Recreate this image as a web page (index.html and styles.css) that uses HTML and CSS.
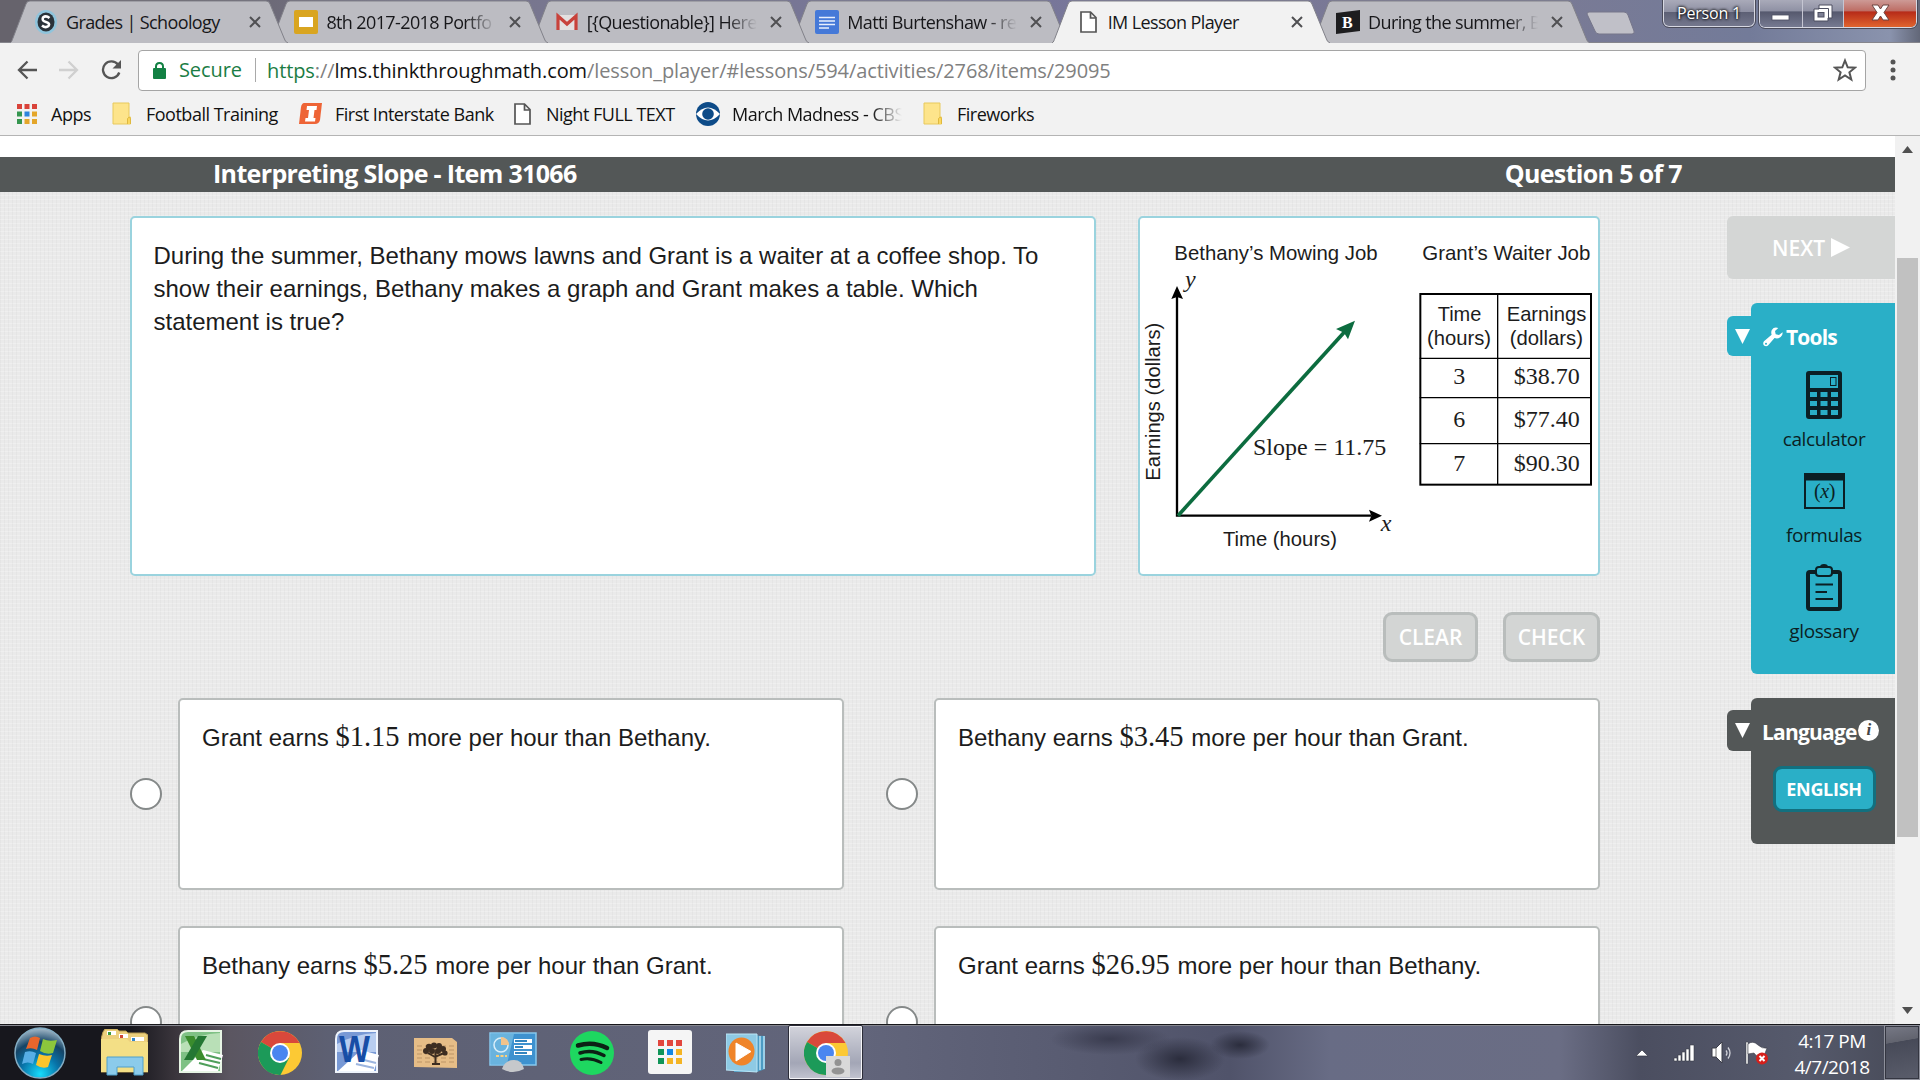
FILE: index.html
```html
<!DOCTYPE html>
<html lang="en">

<head>
    <meta charset="UTF-8">
    <meta name="viewport" content="width=device-width, initial-scale=1.0">
    <title>IM Lesson Player</title>
    <link rel="stylesheet" href="styles.css">
</head>

<body>
    <!-- Shared shapes -->
    <svg class="defs" width="0" height="0">
        <symbol id="tab-shape" viewBox="0 0 278 43">
            <path d="M0 43 C2 42 2 40 3 38 L16 4 Q17 1 20 1 H256 Q259 1 260 4 L274 38 Q275 42 278 43" />
        </symbol>
        <symbol id="close" viewBox="0 0 12 12">
            <path d="M1 1 L11 11 M11 1 L1 11" fill="none" stroke="#505053" stroke-width="2" />
        </symbol>
        <symbol id="doc" viewBox="0 0 17 22">
            <path d="M1 1 H10.5 L16 6.500 V21 H1 Z M10.500 1 V7 H16" fill="#fff" stroke="#555" stroke-width="1.700" />
        </symbol>
        <symbol id="folder" viewBox="0 0 19 23">
            <path d="M1 1 H17 V15 H18.500 V22 H1 Z" fill="#fde48b" stroke="#e8c95c" />
            <path d="M15.500 22 V16.500 Q17 14 18.500 16.500 V22" fill="#fbd75e" stroke="#dfb93f" />
        </symbol>
        <symbol id="chrome" viewBox="0 0 44 44">
            <circle cx="22" cy="22" r="22" fill="#fcc934" />
            <path d="M22 22 L3 11 A22 22 0 0 1 41.500 12 H22 Z" fill="#d9483b" />
            <path d="M22 22 L3 11 A22 22 0 0 0 22.500 44 L31 27 Z" fill="#1c9a59" />
            <circle cx="22" cy="22" r="10" fill="#fff" />
            <circle cx="22" cy="22" r="8" fill="#4a86f0" />
        </symbol>
    </svg>

    <div class="tabstrip">
        <div class="tab">
            <svg class="tab-shape"><use href="#tab-shape" /></svg>
            <svg class="favicon" viewBox="0 0 22 24">
                <ellipse cx="11" cy="12" rx="11" ry="12" fill="#8fc4dc" />
                <ellipse cx="11" cy="12" rx="8.500" ry="9.500" fill="#2a3239" />
                <path d="M14.500 8 Q11 5 8 7.500 Q6.500 11 11 12 Q15.500 13.500 13.500 16 Q10.500 18.500 7 15.500" fill="none" stroke="#fff" stroke-width="2.600" />
            </svg>
            <span class="tab-title">Grades | Schoology</span>
            <svg class="tab-close"><use href="#close" /></svg>
        </div>
        <div class="tab">
            <svg class="tab-shape"><use href="#tab-shape" /></svg>
            <svg class="favicon" viewBox="0 0 24 24">
                <rect width="24" height="24" rx="2" fill="#d9a520" />
                <rect x="5" y="7" width="14" height="10" fill="#fff" />
            </svg>
            <span class="tab-title fade">8th 2017-2018 Portfo</span>
            <svg class="tab-close"><use href="#close" /></svg>
        </div>
        <div class="tab">
            <svg class="tab-shape"><use href="#tab-shape" /></svg>
            <svg class="favicon" viewBox="0 0 22 24">
                <path d="M1 5 H21 V20 H1 Z" fill="#e3e0e0" />
                <path d="M2 20 V6 L11 14 L20 6 V20" fill="none" stroke="#c8423b" stroke-width="3.200" />
            </svg>
            <span class="tab-title fade">[{Questionable}] Here</span>
            <svg class="tab-close"><use href="#close" /></svg>
        </div>
        <div class="tab">
            <svg class="tab-shape"><use href="#tab-shape" /></svg>
            <svg class="favicon" viewBox="0 0 24 24">
                <rect width="24" height="24" rx="2" fill="#4579d8" />
                <path d="M4 7.500 H20 M4 11 H20 M4 14.500 H20 M4 18 H14" stroke="#e8effc" stroke-width="1.700" />
            </svg>
            <span class="tab-title fade">Matti Burtenshaw - re</span>
            <svg class="tab-close"><use href="#close" /></svg>
        </div>
        <div class="tab active">
            <svg class="tab-shape"><use href="#tab-shape" /></svg>
            <svg class="favicon doc"><use href="#doc" /></svg>
            <span class="tab-title">IM Lesson Player</span>
            <svg class="tab-close"><use href="#close" /></svg>
        </div>
        <div class="tab">
            <svg class="tab-shape"><use href="#tab-shape" /></svg>
            <svg class="favicon" viewBox="0 0 24 24">
                <path d="M0 3 L24 0 V21 L0 24 Z" fill="#1d1d1f" />
                <text x="6" y="18" class="brainly">B</text>
            </svg>
            <span class="tab-title fade">During the summer, B</span>
            <svg class="tab-close"><use href="#close" /></svg>
        </div>
        <svg class="new-tab" viewBox="0 0 50 24">
            <path d="M1 3 Q1 1 3 1 H38 Q41 1 42 4 L48 20 Q49 23 46 23 H13 Q10 23 9 20 Z" fill="#c0c0c8" stroke="#76768a" />
        </svg>
        <div class="window-buttons">
            <div class="person">Person 1</div>
            <div class="controls">
                <div class="control">
                    <svg viewBox="0 0 42 32" width="42"><rect x="12" y="15" width="17" height="5" fill="#fff" stroke="#4c4f61" stroke-width=".8" /></svg>
                </div>
                <div class="control">
                    <svg viewBox="0 0 40 32" width="40">
                        <path d="M16 5 H29 V18 H25 V21 H11 V9 H16 Z" fill="#fff" stroke="#4c4f61" />
                        <path d="M15.500 8.500 H25.500 V18" fill="none" stroke="#4c4f61" />
                        <rect x="15" y="12.500" width="6" height="4.500" fill="#7c7f94" stroke="#4c4f61" />
                    </svg>
                </div>
                <div class="control close-window">
                    <svg viewBox="0 0 72 32" width="72"><path d="M28 5 H34 L36.500 9 L39 5 H45 L40 12.500 L45 20 H39 L36.500 16 L34 20 H28 L33 12.500 Z" fill="#fff" stroke="#6c4441" /></svg>
                </div>
            </div>
        </div>
    </div>

    <div class="toolbar">
        <svg class="nav-icon" viewBox="0 0 20 20"><path d="M20 10 H2 M10.500 1.500 L2 10 L10.500 18.500" fill="none" stroke="#555" stroke-width="2.300" /></svg>
        <svg class="nav-icon" viewBox="0 0 20 20"><path d="M0 10 H18 M9.500 1.500 L18 10 L9.500 18.500" fill="none" stroke="#d0d0d0" stroke-width="2.300" /></svg>
        <svg class="nav-icon" viewBox="0 0 20 20"><path d="M17 4.500 A8.400 8.400 0 1 0 18.300 12.500" fill="none" stroke="#555" stroke-width="2.300" /><path d="M20 0 V8.500 H11.500 Z" fill="#555" /></svg>
        <div class="omnibox">
            <svg class="lock" viewBox="0 0 13 17"><rect y="6" width="13" height="11" rx="1" fill="#128043" /><path d="M3 7 V4.500 Q3 1 6.500 1 Q10 1 10 4.500 V7" fill="none" stroke="#128043" stroke-width="2" /></svg>
            <span class="secure">Secure</span>
            <span class="url"><b class="https">https</b>://<b class="host">lms.thinkthroughmath.com</b>/lesson_player/#lessons/594/activities/2768/items/29095</span>
            <svg class="star" viewBox="0 0 24 24"><path d="M12 2.500 L14.700 9.300 L22 9.700 L16.400 14.300 L18.300 21.500 L12 17.500 L5.700 21.500 L7.600 14.300 L2 9.700 L9.300 9.300 Z" fill="none" stroke="#555" stroke-width="2" /></svg>
        </div>
        <svg class="menu" viewBox="0 0 6 22"><circle cx="3" cy="3" r="2.500" /><circle cx="3" cy="11" r="2.500" /><circle cx="3" cy="19" r="2.500" /></svg>
    </div>

    <div class="bookmarks">
        <div class="bookmark apps">
            <svg class="apps-icon" viewBox="0 0 20 20">
                <path d="M0 0h5v5h-5zM7.500 0h5v5h-5zM15 0h5v5h-5z" fill="#d9433a" />
                <path d="M0 7.500h5v5h-5zM0 15h5v5h-5z" fill="#35964f" />
                <path d="M7.500 7.500h5v5h-5z" fill="#2d84dd" />
                <path d="M15 7.500h5v5h-5zM7.500 15h5v5h-5zM15 15h5v5h-5z" fill="#e4a62a" />
            </svg>
            <span>Apps</span>
        </div>
        <div class="bookmark training"><svg class="folder"><use href="#folder" /></svg><span>Football Training</span></div>
        <div class="bookmark bank">
            <svg width="24" height="24" viewBox="0 0 24 24">
                <path d="M5 1 H23 L21 18 Q20 22 16 22 H0 L2 5 Q3 1 5 1 Z" fill="#ee6436" />
                <path d="M8 4 H18 L17.500 8 H15.500 L14.500 16 H16.500 L16 19.500 H6 L6.500 16 H9 L10 8 H7.500 Z" fill="#fff" />
            </svg>
            <span>First Interstate Bank</span>
        </div>
        <div class="bookmark night"><svg class="doc"><use href="#doc" /></svg><span>Night FULL TEXT</span></div>
        <div class="bookmark cbs">
            <svg width="24" height="24" viewBox="0 0 24 24">
                <circle cx="12" cy="12" r="12" fill="#0d4b88" />
                <path d="M0 12 Q12 -1 24 12 Q12 25 0 12 Z" fill="#fff" />
                <circle cx="12" cy="12" r="5.800" fill="#0d4b88" />
            </svg>
            <span class="fade">March Madness - CBS</span>
        </div>
        <div class="bookmark fireworks"><svg class="folder"><use href="#folder" /></svg><span>Fireworks</span></div>
    </div>

    <div class="viewport">
        <div class="page">
            <div class="lesson-header">
                <span class="lesson-title">Interpreting Slope - Item 31066</span>
                <span class="lesson-count">Question 5 of 7</span>
            </div>

            <div class="lesson">
                <div class="content">
                    <div class="stem">
                        <div class="panel question">
                            <p>During the summer, Bethany mows lawns and Grant is a waiter at a coffee shop. To show their earnings, Bethany makes a graph and Grant makes a table. Which statement is true?</p>
                        </div>
                        <div class="panel figure">
                            <svg viewBox="31 24 1374 1068" width="458" height="356">
                                <g class="fig-sans">
                                    <text x="134" y="149" textLength="610" lengthAdjust="spacingAndGlyphs">Bethany’s Mowing Job</text>
                                    <text x="878" y="149" textLength="504" lengthAdjust="spacingAndGlyphs">Grant’s Waiter Job</text>
                                    <text x="280" y="1007" textLength="342" lengthAdjust="spacingAndGlyphs">Time (hours)</text>
                                    <text transform="translate(92 812) rotate(-90)" textLength="474" lengthAdjust="spacingAndGlyphs">Earnings (dollars)</text>
                                    <text x="924" y="333" textLength="131" lengthAdjust="spacingAndGlyphs">Time</text>
                                    <text x="892" y="406" textLength="192" lengthAdjust="spacingAndGlyphs">(hours)</text>
                                    <text x="1131" y="333" textLength="239" lengthAdjust="spacingAndGlyphs">Earnings</text>
                                    <text x="1140" y="406" textLength="220" lengthAdjust="spacingAndGlyphs">(dollars)</text>
                                </g>
                                <g class="fig-serif">
                                    <text x="166" y="230" class="axis">y</text>
                                    <text x="753" y="962" class="axis">x</text>
                                    <text x="370" y="734" textLength="400" lengthAdjust="spacingAndGlyphs">Slope = 11.75</text>
                                    <text x="971" y="521">3</text>
                                    <text x="971" y="652">6</text>
                                    <text x="971" y="782">7</text>
                                    <text x="1152" y="521" textLength="198" lengthAdjust="spacingAndGlyphs">$38.70</text>
                                    <text x="1152" y="652" textLength="198" lengthAdjust="spacingAndGlyphs">$77.40</text>
                                    <text x="1152" y="782" textLength="198" lengthAdjust="spacingAndGlyphs">$90.30</text>
                                </g>
                                <path d="M142 255 V917 H725" fill="none" stroke="#000" stroke-width="7" />
                                <path d="M142 228 L160 267 L142 261 L125 267 Z M757 917 L718 899 L725 917 L718 935 Z" />
                                <path d="M145 917 L645 365" stroke="#0c6c3f" stroke-width="11" />
                                <path d="M676 332 L655 388 L643 368 L619 357 Z" fill="#0c6c3f" />
                                <rect x="872" y="252" width="512" height="572" fill="none" stroke="#000" stroke-width="6" />
                                <path d="M870 445 H1386 M870 563 H1386 M870 701 H1386 M1104 250 V824" stroke="#000" stroke-width="4" />
                            </svg>
                        </div>
                    </div>

                    <div class="actions">
                        <button class="btn">CLEAR</button>
                        <button class="btn check">CHECK</button>
                    </div>

                    <div class="answers">
                        <label class="answer"><span class="radio"></span><span class="choice">Grant earns <span class="math">$1.15</span> more per hour than Bethany.</span></label>
                        <label class="answer"><span class="radio"></span><span class="choice">Bethany earns <span class="math">$3.45</span> more per hour than Grant.</span></label>
                        <label class="answer"><span class="radio"></span><span class="choice">Bethany earns <span class="math">$5.25</span> more per hour than Grant.</span></label>
                        <label class="answer"><span class="radio"></span><span class="choice">Grant earns <span class="math">$26.95</span> more per hour than Bethany.</span></label>
                    </div>
                </div>

                <div class="sidebar">
                    <div class="next"><span>NEXT</span><svg width="19" height="19"><path d="M0 0 L19 9.500 L0 19 Z" fill="#fff" /></svg></div>

                    <div class="side-panel tools">
                        <div class="handle"><svg width="15" height="15"><path d="M0 0 H15 L7.500 15 Z" fill="#fff" /></svg></div>
                        <div class="side-body">
                            <div class="side-title">
                                <svg class="wrench" viewBox="0 0 20 20"><path d="M19.500 5.200 L16 8 L12.700 7.200 L12 4 L15.300 1 Q11 -.5 8.800 3 Q7.800 5.300 8.600 7.700 L1 14.300 Q-.6 16.500 1 18.500 Q3.200 20 5 18.500 L11.500 11 Q15 12.200 17.700 10 Q20 8 19.500 5.200 Z" fill="#fff" /><circle cx="3" cy="16.700" r="1" fill="#2aafc7" /></svg>
                                <span>Tools</span>
                            </div>
                            <div class="tool calculator">
                                <svg width="36" height="48" viewBox="0 0 36 48">
                                    <rect width="36" height="48" rx="3" fill="#0b1f24" />
                                    <path d="M4 4 H32 V17 H4 Z M4 21h7v5h-7z M14.500 21h7v5h-7z M25 21h7v5h-7z M4 30h7v5h-7z M14.500 30h7v5h-7z M25 30h7v5h-7z M4 39h7v5h-7z M14.500 39h7v5h-7z M25 39h7v5h-7z" fill="#2aafc7" />
                                    <rect x="24.500" y="6.500" width="5.500" height="8" fill="none" stroke="#0b1f24" />
                                </svg>
                                <span>calculator</span>
                            </div>
                            <div class="tool formulas">
                                <svg width="41" height="36" viewBox="0 0 41 36">
                                    <rect x="1" y="1" width="39" height="34" fill="none" stroke="#0b1f24" stroke-width="2" />
                                    <rect width="41" height="7.500" fill="#0b1f24" />
                                    <text x="20.500" y="25" text-anchor="middle" class="formula">(<tspan class="formula-x">x</tspan>)</text>
                                </svg>
                                <span>formulas</span>
                            </div>
                            <div class="tool glossary">
                                <svg width="36" height="47" viewBox="0 0 36 47">
                                    <rect x="2" y="8" width="32" height="37" rx="2" fill="none" stroke="#0b1f24" stroke-width="4" />
                                    <path d="M14 3 Q14 0 18 0 Q22 0 22 3 Z" fill="#0b1f24" />
                                    <rect x="10" y="3" width="16" height="9" rx="3" fill="#2aafc7" stroke="#0b1f24" stroke-width="2" />
                                    <path d="M9.500 20.500 H27 M9.500 28 H21 M9.500 35 H27" stroke="#0b1f24" stroke-width="2" />
                                </svg>
                                <span>glossary</span>
                            </div>
                        </div>
                    </div>

                    <div class="side-panel language">
                        <div class="handle"><svg width="15" height="15"><path d="M0 0 H15 L7.500 15 Z" fill="#fff" /></svg></div>
                        <div class="side-body">
                            <div class="side-title"><span>Language</span><i class="info">i</i></div>
                            <button class="english">ENGLISH</button>
                        </div>
                    </div>
                </div>
            </div>
        </div>

        <div class="scrollbar">
            <svg width="11" height="7"><path d="M0 7 L5.500 0 L11 7 Z" fill="#505050" /></svg>
            <div class="track"><div class="thumb"></div></div>
            <svg width="11" height="7"><path d="M0 0 L5.500 7 L11 0 Z" fill="#505050" /></svg>
        </div>
    </div>

    <div class="taskbar">
        <div class="task start">
            <svg width="52" height="52" viewBox="0 0 52 52">
                <defs>
                    <radialGradient id="orb" cx=".5" cy=".92" r=".95">
                        <stop offset="0" stop-color="#16dcfc" />
                        <stop offset=".4" stop-color="#0873a8" />
                        <stop offset=".68" stop-color="#154466" />
                        <stop offset="1" stop-color="#b9cbd8" />
                    </radialGradient>
                </defs>
                <circle cx="26" cy="26" r="25" fill="url(#orb)" stroke="#83adc4" stroke-width="1.500" />
                <path d="M16 11 Q21 8 26 11 L23 23 Q18 20 12 22 Z" fill="#e8662c" />
                <path d="M29 12 Q35 15 43 13 L39 26 Q32 28 26 24 Z" fill="#8cc63c" />
                <path d="M11 25 Q17 23 22 26 L19 37 Q14 34 8 37 Z" fill="#56aee6" />
                <path d="M25 27 Q32 30 38 28 L34 40 Q28 42 22 38 Z" fill="#fcc52c" />
            </svg>
        </div>
        <div class="task explorer">
            <svg width="47" height="47" viewBox="0 0 47 47">
                <path d="M2 3 L4 0 H16 L18 2 H25 L27 4 H44 L47 6 V43 H0 V10 Z" fill="#ecd07d" stroke="#b69a50" />
                <path d="M6 2 H15 V6 H6 Z M18 5 H27 V9 H18 Z M30 8 H43 V12 H30 Z" fill="#fff" />
                <path d="M7 3h3v3h-3z" fill="#3d9b3d" /><path d="M19 6h3v3h-3z" fill="#cf4636" /><path d="M31 9h3v3h-3z" fill="#3388ca" />
                <path d="M0 10 H26 L29 13 H47 V43 H0 Z" fill="#f3df86" />
                <path d="M6 28 H42 V46 H33 V38 H16 V46 H6 Z" fill="#8bcbeb" stroke="#4f9fca" />
            </svg>
        </div>
        <div class="task excel">
            <svg width="44" height="44" viewBox="0 0 44 44">
                <path d="M9 1 H42 V42 H1 V9 Q1 1 9 1 Z" fill="#7fc185" stroke="#e7f5e5" stroke-width="2" />
                <path d="M2 14 Q20 4 41 3 V22 H2 Z" fill="#b9e0b7" />
                <path d="M24 20 L44 25 L39 41 H3 Z" fill="#fff" />
                <path d="M27 25 L42 29 M24 29 L41 33 M20 33 L39 38" stroke="#4f9f5b" stroke-width="2" />
                <path d="M6 6 H15 L27 30 H18 Z" fill="#3a8c2d" /><path d="M19 6 H28 L14 30 H5 Z" fill="#247733" />
            </svg>
        </div>
        <div class="task chrome"><svg width="44" height="44"><use href="#chrome" /></svg></div>
        <div class="task word">
            <svg width="44" height="44" viewBox="0 0 44 44">
                <path d="M9 1 H42 V42 H1 V9 Q1 1 9 1 Z" fill="#7899d5" stroke="#eff4fc" stroke-width="2" />
                <path d="M2 14 Q20 4 41 3 V22 H2 Z" fill="#b8cdf0" />
                <path d="M26 20 L44 25 L39 41 H3 Z" fill="#fff" />
                <path d="M25 29 L41 33 M21 34 L39 38" stroke="#9cb5df" stroke-width="2" />
                <text x="4" y="32" class="word-w" textLength="31" lengthAdjust="spacingAndGlyphs">W</text>
            </svg>
        </div>
        <div class="task tree">
            <svg width="44" height="32" viewBox="0 0 44 32">
                <path d="M0 1 H38 L43 5 V31 L0 30 Z" fill="#e6bd87" />
                <path d="M3 9H41M3 13H41M3 17H41M3 21H41M3 25H41" stroke="#bd9566" stroke-dasharray="5 3" />
                <g fill="#3d2d21">
                    <circle cx="12" cy="14" r="3" /><circle cx="15" cy="10" r="3.200" /><circle cx="20" cy="8.500" r="3" /><circle cx="25" cy="9" r="3" />
                    <circle cx="29" cy="12" r="3" /><circle cx="31" cy="16" r="2.600" /><circle cx="18" cy="14" r="3" /><circle cx="24" cy="14" r="3" />
                </g>
                <path d="M14 16 L21 20 L30 16 M21.500 15 V27 M18 27 H26" fill="none" stroke="#3d2d21" stroke-width="2" />
            </svg>
        </div>
        <div class="task panel-icon">
            <svg width="48" height="42" viewBox="0 0 48 42">
                <path d="M1 1 H47 V33 H1 Z" fill="#3e92cf" stroke="#86c8ed" stroke-width="1.500" />
                <path d="M2 2 H25 L18 32 H2 Z" fill="#69b3de" />
                <circle cx="12" cy="13" r="7" fill="none" stroke="#d9eef9" stroke-width="1.500" /><path d="M12 13 V5 A8 8 0 0 1 20 13 Z" fill="#f2c38b" />
                <path d="M25 9H43M25 15H43M25 21H43" stroke="#fff" stroke-width="4" /><path d="M26 9H38M26 15H34M26 21H38" stroke="#3385bf" stroke-width="2" />
                <path d="M7 24H18" stroke="#fbd07c" stroke-width="2" stroke-dasharray="3 1.500" />
                <path d="M13 37 Q16 28 25 28 Q33 28 35 37 Q24 43 13 37 Z" fill="#c6c8cb" />
            </svg>
        </div>
        <div class="task spotify">
            <svg width="44" height="44" viewBox="0 0 44 44">
                <circle cx="22" cy="22" r="22" fill="#1ed760" />
                <path d="M8 14.500 Q23 10 37 17" fill="none" stroke="#0c2115" stroke-width="4.500" stroke-linecap="round" />
                <path d="M10 22 Q22 18 34 24.500" fill="none" stroke="#0c2115" stroke-width="3.500" stroke-linecap="round" />
                <path d="M11 28.500 Q21 26 31 31.500" fill="none" stroke="#0c2115" stroke-width="3" stroke-linecap="round" />
            </svg>
        </div>
        <div class="task launcher">
            <svg width="44" height="44" viewBox="0 0 44 44">
                <rect width="44" height="44" rx="3" fill="#f5f5f5" />
                <path d="M10 10h6v6h-6zM19 10h6v6h-6zM28 10h6v6h-6z" fill="#e2463e" />
                <path d="M10 19h6v6h-6zM10 28h6v6h-6z" fill="#109558" /><path d="M19 19h6v6h-6z" fill="#1287e4" />
                <path d="M28 19h6v6h-6zM19 28h6v6h-6zM28 28h6v6h-6z" fill="#f4b424" />
            </svg>
        </div>
        <div class="task media">
            <svg width="40" height="40" viewBox="0 0 40 40">
                <path d="M8 1 L39 3 V36 L31 39 H8 Z" fill="#4c9bc3" /><path d="M34 3 V37 M38 3 V36" stroke="#b6e1f3" stroke-width="1.500" />
                <path d="M0 1 H31 V39 L0 37 Z" fill="#8ecae4" stroke="#bce5f5" />
                <ellipse cx="15.500" cy="18.500" rx="13" ry="14" fill="#ef8429" /><path d="M10 10 L25 18.500 L10 28 Z" fill="#fff" stroke="#fff" stroke-linejoin="round" />
            </svg>
        </div>
        <div class="task running">
            <svg width="46" height="46" viewBox="0 0 46 46">
                <use href="#chrome" width="44" height="44" />
                <rect x="22" y="25" width="24" height="21" fill="#d9d9d9" /><circle cx="34" cy="31.500" r="3.500" fill="#939393" /><ellipse cx="34" cy="40" rx="6.500" ry="3.500" fill="#939393" />
            </svg>
        </div>

        <div class="tray">
            <svg class="tray-up" width="14" height="8"><path d="M1 7 L7 1 L13 7 Z" fill="#fff" stroke="#3b3c47" stroke-width=".7" /></svg>
            <svg class="tray-signal" width="22" height="18"><path d="M1 14h3v3h-3zM5 11h3v6h-3zM9 8h3v9h-3zM13 5h3v12h-3zM17 1h4v16h-4z" fill="#fff" stroke="#3b3c47" stroke-width=".6" /></svg>
            <svg class="tray-volume" width="21" height="23"><path d="M1 7 H5 L11 1 V22 L5 16 H1 Z" fill="#fff" stroke="#3b3c47" /><path d="M5 7 V16" stroke="#777" /><path d="M15 9.500 Q17 12 15 14.500 M17 6.500 Q21 12 17 17.500" fill="none" stroke="#d2d3da" stroke-width="1.300" /></svg>
            <svg class="tray-flag" width="25" height="24"><path d="M1 1 H3 V23 H1 Z" fill="#fff" stroke="#3b3c47" stroke-width=".5" /><path d="M3 3 Q8 -1 13 4 Q17 8 22 7 L19 15 Q12 17 9 12 L3 13 Z" fill="#fff" stroke="#3b3c47" stroke-width=".6" /><circle cx="17" cy="17.500" r="6" fill="#d51f1b" /><path d="M14.500 15 L19.500 20 M19.500 15 L14.500 20" stroke="#fff" stroke-width="2" /></svg>
            <div class="clock"><span>4:17 PM</span><span>4/7/2018</span></div>
            <div class="show-desktop"></div>
        </div>
    </div>
</body>

</html>
```

FILE: styles.css
```css
* {
    margin: 0;
    padding: 0;
    box-sizing: border-box;
}

html, body {
    width: 1920px;
    height: 1080px;
    overflow: hidden;
    font-family: "Open Sans", "Noto Sans", sans-serif;
}

body {
    display: flex;
    flex-direction: column;
}

svg {
    display: block;
    flex: none;
}

.defs {
    position: absolute;
}

/* Browser tabs */
.tabstrip {
    display: flex;
    flex: none;
    height: 43px;
    padding-left: 10px;
    background: linear-gradient(90deg, #66636c 0, #66636c 180px, #78768c 420px, #77769a 1000px, #7b7a94 1500px, #737b99 1750px, #8a93ad 1890px, #626778 1920px);
    border-bottom: 1px solid #85858c;
}

.tab {
    position: relative;
    display: flex;
    flex: none;
    align-items: center;
    width: 278px;
    height: 43px;
    padding-left: 24px;
    margin-right: -17.600px;
    z-index: 6;
}

.tab:nth-child(2) { z-index: 5; }
.tab:nth-child(3) { z-index: 4; }
.tab:nth-child(4) { z-index: 3; }
.tab:nth-child(6) { z-index: 1; }

.tab.active {
    z-index: 10;
}

.tab-shape {
    position: absolute;
    left: 0;
    top: 0;
    width: 278px;
    height: 43px;
    fill: #bcbcc2;
    stroke: #818189;
    z-index: -1;
}

.tab.active .tab-shape {
    fill: #f2f2f2;
}

.favicon {
    width: 24px;
    height: 24px;
    margin-right: 8px;
}

.favicon.doc {
    width: 17px;
    height: 22px;
    margin: 0 11px 0 4px;
}

.brainly {
    font: bold 16px "Liberation Serif", serif;
    fill: #fff;
}

.tab-title {
    width: 170px;
    margin-right: 13px;
    white-space: nowrap;
    font-size: 18px;
    letter-spacing: -.620px;
    color: #17171a;
}

.fade {
    -webkit-mask-image: linear-gradient(90deg, #000 82%, transparent 100%);
    mask-image: linear-gradient(90deg, #000 82%, transparent 100%);
}

.tab-close {
    width: 12px;
    height: 12px;
}

.new-tab {
    width: 50px;
    height: 24px;
    margin: 11px 0 0 14px;
}

.window-buttons {
    display: flex;
    align-items: flex-start;
    gap: 4px;
    margin-left: auto;
    padding-right: 3px;
}

.person {
    width: 92px;
    height: 27px;
    border: 1px solid #d7d8e2;
    border-top: 0;
    border-radius: 0 0 6px 6px;
    outline: 1px solid #4a4b5a;
    background: linear-gradient(#a9aab9 0, #8e90a3 45%, #5c5f74 46%, #74778d 100%);
    color: #fff;
    font-size: 16px;
    letter-spacing: -.200px;
    line-height: 26px;
    text-align: center;
    text-shadow: 0 0 3px #000, 0 0 3px #000;
}

.controls {
    display: flex;
    height: 28px;
    border: 1px solid #d7d8e2;
    border-top: 0;
    border-radius: 0 0 6px 6px;
    outline: 1px solid #4a4b5a;
    overflow: hidden;
}

.control {
    border-right: 1px solid #c5c6d3;
    background: linear-gradient(#a9aab9 0, #8e90a3 42%, #55586d 43%, #767a91 100%);
}

.control.close-window {
    border: 0;
    background: linear-gradient(#cd9a96 0, #bd6b62 42%, #b62a18 43%, #e0642e 100%);
}

/* Address bar */
.toolbar {
    display: flex;
    flex: none;
    align-items: center;
    height: 54px;
    padding: 0 24px 0 17px;
    background: #f2f2f2;
}

.nav-icon {
    width: 20px;
    height: 20px;
    margin-right: 22px;
}

.nav-icon + .nav-icon + .nav-icon {
    margin-right: 17px;
}

.omnibox {
    display: flex;
    align-items: center;
    width: 1728px;
    height: 41px;
    padding: 0 8px 0 14px;
    border: 1px solid #a5a5a5;
    border-radius: 4px;
    background: #fff;
    font-size: 20px;
    letter-spacing: -.100px;
}

.lock {
    width: 13px;
    height: 17px;
    margin-right: 13px;
}

.secure {
    width: 77px;
    height: 24px;
    line-height: 23px;
    border-right: 1px solid #a9a9a9;
    color: #1b7d44;
}

.url {
    margin-left: 11px;
    color: #808080;
    white-space: nowrap;
}

.url b {
    font-weight: normal;
}

.url .https {
    color: #1b7d44;
}

.url .host {
    color: #111;
}

.star {
    width: 24px;
    height: 24px;
    margin-left: auto;
}

.menu {
    width: 6px;
    height: 22px;
    margin-left: auto;
    fill: #555;
}

.bookmarks {
    display: flex;
    flex: none;
    align-items: center;
    height: 39px;
    padding: 0 0 5px 17px;
    background: #f2f2f2;
    border-bottom: 1px solid #b4b4b4;
    font-size: 18px;
    letter-spacing: -.500px;
    color: #111;
}

.bookmark {
    display: flex;
    align-items: center;
    white-space: nowrap;
}

.bookmark .folder {
    width: 19px;
    height: 23px;
    margin-right: 15px;
}

.bookmark .doc {
    width: 17px;
    height: 22px;
    margin-right: 15px;
}

.apps-icon {
    width: 20px;
    height: 20px;
    margin-right: 14px;
}

.apps { width: 95px; }
.training { width: 187px; }
.bank { width: 215px; gap: 12px; }
.night { width: 182px; }
.cbs { width: 227px; gap: 12px; }

.cbs .fade {
    width: 170px;
}

/* Lesson page */
.viewport {
    display: flex;
    flex: none;
    height: 888px;
    overflow: hidden;
}

.page {
    width: 1895px;
    padding-top: 21px;
    background: #fff;
}

.lesson-header {
    display: flex;
    justify-content: space-between;
    height: 35px;
    padding: 0 213px;
    background: #535757;
    color: #fff;
    font-size: 25px;
    letter-spacing: -.660px;
    font-weight: bold;
    line-height: 33px;
    white-space: nowrap;
}

.lesson {
    display: flex;
    justify-content: space-between;
    height: 832px;
    padding: 24px 0 0 130px;
    background-color: #eaeaea;
    background-image:
        repeating-linear-gradient(90deg, rgba(0, 0, 0, .022) 0, rgba(0, 0, 0, .022) 1px, transparent 1px, transparent 4px),
        repeating-linear-gradient(0deg, rgba(255, 255, 255, .25) 0, rgba(255, 255, 255, .25) 1px, transparent 1px, transparent 4px);
}

.content {
    width: 1470px;
}

.stem {
    display: flex;
    justify-content: space-between;
}

.panel {
    height: 360px;
    border: 2px solid #9ad3de;
    border-radius: 5px;
    background: #fff;
}

.question {
    width: 966px;
    padding: 21px 40px 0 21.500px;
    font: 24px/33px "Liberation Sans", Arial, sans-serif;
    color: #1c1c1c;
}

.figure {
    width: 462px;
}

.fig-sans {
    font: 62px "Liberation Sans", Arial, sans-serif;
    fill: #1c1c1c;
}

.fig-serif {
    font: 72px "Liberation Serif", "Times New Roman", serif;
    fill: #1c1c1c;
}

.axis {
    font-style: italic;
}

.actions {
    display: flex;
    justify-content: flex-end;
    gap: 25px;
    margin-top: 36px;
}

.btn {
    width: 95px;
    height: 50px;
    border: 3px solid #b9bdbc;
    border-radius: 9px;
    background: #d3d5d4;
    color: #fff;
    font-family: "Open Sans", sans-serif;
    font-size: 21px;
    font-weight: 600;
}

.btn.check {
    width: 97px;
}

.answers {
    display: grid;
    grid-template-columns: 714px 714px;
    justify-content: space-between;
    row-gap: 36px;
    margin-top: 36px;
}

.answer {
    display: flex;
    align-items: center;
    justify-content: space-between;
}

.radio {
    width: 32px;
    height: 32px;
    border: 2px solid #858989;
    border-radius: 50%;
    background: #fff;
}

.choice {
    width: 666px;
    height: 192px;
    padding: 20px 22px;
    border: 2px solid #b9bdbc;
    border-radius: 5px;
    background: #fff;
    font: 24px/36px "Liberation Sans", Arial, sans-serif;
    color: #1c1c1c;
}

.math {
    margin-right: 1px;
    font: 28.500px/30px "Liberation Serif", "Times New Roman", serif;
}

/* Right column */
.sidebar {
    display: flex;
    flex-direction: column;
    gap: 24px;
    width: 168px;
    font-family: "Open Sans", sans-serif;
}

.next {
    display: flex;
    align-items: center;
    gap: 7px;
    height: 63px;
    padding-left: 45px;
    border-radius: 6px 0 0 6px;
    background: #d4d6d5;
    color: #fff;
    font-size: 21px;
    font-weight: 600;
}

.next span {
    width: 52px;
}

.side-panel {
    display: flex;
    align-items: flex-start;
}

.handle {
    display: flex;
    align-items: center;
    justify-content: center;
    width: 24px;
    height: 40px;
    margin-top: 13px;
    padding-left: 7px;
    border-radius: 6px 0 0 6px;
    background: #2aafc7;
}

.side-body {
    width: 144px;
    border-radius: 6px 0 0 6px;
    background: #2aafc7;
}

.tools .side-body {
    height: 371px;
    padding-top: 18px;
}

.side-title {
    display: flex;
    align-items: center;
    height: 32px;
    padding-left: 12px;
    color: #fff;
    font-size: 21px;
    letter-spacing: -.800px;
    font-weight: bold;
}

.wrench {
    width: 20px;
    height: 20px;
    margin-right: 3px;
}

.tool {
    display: flex;
    flex-direction: column;
    align-items: center;
    padding-left: 2px;
    font-size: 19px;
    letter-spacing: -.400px;
    line-height: 24px;
    color: #0b1f24;
}

.calculator { margin-top: 18px; }
.calculator span { margin-top: 8px; }
.formulas { margin-top: 22px; }
.formulas span { margin-top: 14px; }
.glossary { margin-top: 17px; }
.glossary span { margin-top: 8px; }

.formula {
    font: 20px "Liberation Serif", serif;
    fill: #0b1f24;
}

.formula-x {
    font-style: italic;
}

.language .handle,
.language .side-body {
    background: #535757;
}

.language .handle {
    margin-top: 12px;
    height: 41px;
}

.language .side-body {
    height: 146px;
    padding-top: 18px;
}

.language .side-title {
    padding-left: 11px;
}

.language .side-title span {
    width: 93px;
}

.info {
    width: 21px;
    height: 21px;
    margin: -4px 0 0 3px;
    border-radius: 50%;
    background: #fff;
    color: #444;
    font: italic bold 17px/20px "Liberation Serif", serif;
    text-align: center;
}

.english {
    display: block;
    width: 103px;
    height: 46px;
    margin: 18px 0 0 21.500px;
    border: 3px solid #12707f;
    border-radius: 9px;
    background: #2aafc7;
    color: #fff;
    font-family: "Open Sans", sans-serif;
    font-size: 18px;
    letter-spacing: -.300px;
    font-weight: bold;
}

/* Scrollbar */
.scrollbar {
    display: flex;
    flex-direction: column;
    align-items: center;
    width: 25px;
    padding: 10px 0;
    background: #f1f1f1;
}

.track {
    flex: 1;
    padding-top: 105px;
}

.thumb {
    width: 21px;
    height: 579px;
    background: #c1c1c1;
}

/* Windows taskbar */
.taskbar {
    display: flex;
    flex: none;
    align-items: center;
    height: 56px;
    padding-left: 14px;
    border-top: 1px solid #17171b;
    box-shadow: inset 0 1px 0 #85868e;
    background:
        radial-gradient(ellipse 45px 22px at 1180px 34px, #2b2d3d, transparent),
        radial-gradient(ellipse 30px 14px at 1240px 20px, #2b2d3d, transparent),
        radial-gradient(ellipse 60px 16px at 1110px 14px, #3a3c4f, transparent),
        linear-gradient(90deg, #17171d 0, #17171d 130px, #3a353c 175px, #5b5661 230px, #5d6073 330px, #62657b 860px, #575a70 1100px, #50536a 1230px, #686c85 1330px, #6a6d84 1560px, #4b4e60 1640px, #565a6c 1800px, #464956 1920px);
}

.start { margin-right: 35px; }
.explorer { margin-right: 31px; }
.excel { margin-right: 35px; }
.chrome { margin-right: 33px; }
.word { margin-right: 35px; }
.tree { margin-right: 31px; }
.panel-icon { margin-right: 33px; }
.spotify { margin-right: 34px; }
.launcher { margin-right: 34px; }
.media { margin-right: 22px; }

.excel,
.word,
.launcher {
    padding-bottom: 2px;
}

.word-w {
    font: bold 36px "Liberation Sans", sans-serif;
    fill: #174ea6;
}

.running {
    width: 75px;
    height: 55px;
    padding: 5px 0 0 15px;
    border: 1px solid #2b2c38;
    border-radius: 2px;
    box-shadow: inset 0 0 0 1px #f5f5f8;
    background: linear-gradient(#d3d4dc, #a3a6b6 70%, #c3c5d1);
}

.tray {
    display: flex;
    align-items: center;
    height: 55px;
    margin-left: auto;
    color: #fff;
}

.tray-up { margin-right: 24px; }
.tray-signal { margin-right: 16px; }
.tray-volume { margin-right: 13px; }
.tray-flag { margin-right: 20px; }

.clock {
    display: flex;
    flex-direction: column;
    width: 84px;
    margin-right: 10px;
    padding-top: 2px;
    font-size: 19px;
    letter-spacing: -.500px;
    line-height: 26px;
    text-align: center;
    white-space: nowrap;
}

.show-desktop {
    width: 36px;
    height: 55px;
    border: 1px solid #8e909b;
    outline: 1px solid #343641;
    outline-offset: -2px;
    background: linear-gradient(170deg, #777986 0, #62646f 30%, #474a58 31%, #5a5d6b 100%);
}
```
